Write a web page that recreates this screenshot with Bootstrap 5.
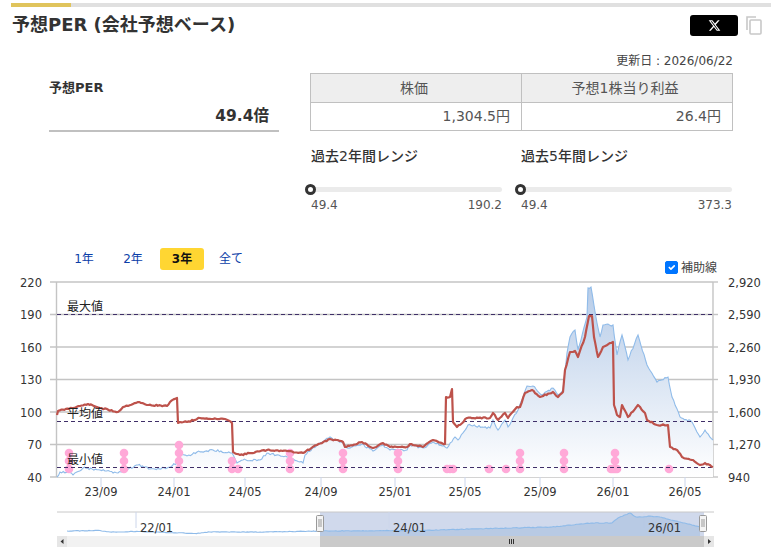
<!DOCTYPE html>
<html lang="ja">
<head>
    <meta charset="UTF-8">
    <title>予想PER</title>
    <link rel="stylesheet" href="https://cdn.jsdelivr.net/npm/bootstrap@5.3.0/dist/css/bootstrap.min.css">
    <style>
        body { font-family: "DejaVu Sans", "Noto Sans CJK JP", sans-serif; color: #333; background: #fff; overflow: hidden; }
        .page { width: 771px; height: 550px; padding-top: 3px; }
        .top-bar { height: 4px; margin-left: 11px; background: #e0e0e0; }
        .top-bar div { width: 60px; height: 4px; background: #e0c45c; }
        .title-row { height: 28px; margin-top: 4px; padding: 0 9px 0 12px; }
        .title-row h1 { font-size: 18px; font-weight: 700; line-height: 28px; margin: 0; }
        .x-btn { width: 48px; height: 21px; background: #000; border-radius: 3px; margin-right: 8px; }
        .update { font-size: 12px; line-height: 16px; color: #444; margin-top: 14px; padding-right: 38px; }
        .summary { margin-top: 4px; padding-left: 49px; padding-right: 38px; }
        .per-box { width: 230px; height: 59px; margin-right: 31px; border-bottom: 2px solid #c0c0c0; }
        .per-label { font-size: 13px; font-weight: 700; line-height: 16px; margin-top: 7px; }
        .per-value { font-size: 15.5px; font-weight: 700; line-height: 24px; margin-top: 8px; padding-right: 10px; }
        .table.price-table { width: 423px; margin: 0; font-size: 14px; table-layout: fixed; border-color: #c0c0c0; }
        .table.price-table > * > * > * { padding: 0 11px 0 7px; height: 28.5px; line-height: 20px; vertical-align: middle; color: #555; }
        .table.price-table th { background: #eee; font-weight: 400; text-align: center; }
        .table.price-table td { text-align: right; }
        .ranges { margin-left: 305px; margin-top: 15px; }
        .range-a { width: 197px; margin-right: 13px; }
        .range-b { width: 217px; }
        .range-title { font-size: 14px; font-weight: 500; line-height: 18px; padding-left: 6px; }
        .track { position: relative; height: 5px; background: #ebebeb; border-radius: 3px; margin-top: 22px; }
        .thumb { position: absolute; left: 0; top: -3px; width: 11px; height: 11px; border: 3px solid #333; border-radius: 50%; background: #fff; }
        .range-values { font-size: 12px; line-height: 16px; color: #555; margin-top: 5px; padding-left: 6px; }
        .chart-head { height: 27px; margin-top: 35px; padding-right: 54px; padding-left: 62px; }
        .periods a { display: block; width: 44px; height: 22px; margin-right: 5px; font-size: 12px; line-height: 22px; text-align: center; color: #0b3ea8; text-decoration: none; border-radius: 3px; }
        .periods a.active { background: #ffd632; color: #111; font-weight: 700; }
        .aux { font-size: 12px; line-height: 14px; color: #444; margin: 13px 0 0; }
        .aux .form-check-input { width: 13px; height: 13px; margin: 0 3px 0 0; float: none; border-radius: 2px; vertical-align: -2px; }
        .aux .form-check-input:checked { background-color: #0075ff; border-color: #0075ff; }
        .chart { display: block; }
        .chart text { font-family: "DejaVu Sans", "Noto Sans CJK JP", sans-serif; font-size: 12px; fill: #222; }
        .chart .axis { font-size: 11.5px; fill: #333; }
        .chart .grid { stroke: #c4c4c4; stroke-width: 1.4; }
        .chart .dash { stroke: #3f2f68; stroke-width: 1; stroke-dasharray: 4 3; }
        .chart .tick { stroke: #ccd6eb; stroke-width: 1; }
    </style>
</head>
<body>
<div class="page">
    <div class="top-bar"><div></div></div>

    <div class="title-row d-flex justify-content-between align-items-center">
        <h1>予想PER (会社予想ベース)</h1>
        <div class="d-flex align-items-center">
            <div class="x-btn d-flex align-items-center justify-content-center">
                <svg width="13" height="13" viewBox="0 0 24 24" fill="#fff"><path d="M18.244 2.25h3.308l-7.227 8.26 8.502 11.24H16.17l-5.214-6.817L4.99 21.75H1.68l7.73-8.835L1.254 2.25H8.08l4.713 6.231zm-1.161 17.52h1.833L7.084 4.126H5.117z"/></svg>
            </div>
            <svg width="16" height="19" viewBox="0 0 16 19" fill="none" stroke="#c8c8c8" stroke-width="1.6"><path d="M1 14V1h9"/><rect x="4" y="4" width="11" height="14" rx="1"/></svg>
        </div>
    </div>

    <div class="update text-end">更新日 : 2026/06/22</div>

    <div class="summary d-flex align-items-start">
        <div class="per-box flex-shrink-0">
            <div class="per-label">予想PER</div>
            <div class="per-value text-end">49.4倍</div>
        </div>
        <table class="table table-bordered price-table">
            <thead><tr><th>株価</th><th>予想1株当り利益</th></tr></thead>
            <tbody><tr><td>1,304.5円</td><td>26.4円</td></tr></tbody>
        </table>
    </div>

    <div class="ranges d-flex">
        <div class="range-a">
            <div class="range-title">過去2年間レンジ</div>
            <div class="track"><div class="thumb"></div></div>
            <div class="range-values d-flex justify-content-between"><span>49.4</span><span>190.2</span></div>
        </div>
        <div class="range-b">
            <div class="range-title">過去5年間レンジ</div>
            <div class="track"><div class="thumb"></div></div>
            <div class="range-values d-flex justify-content-between"><span>49.4</span><span>373.3</span></div>
        </div>
    </div>

    <div class="chart-head d-flex justify-content-between">
        <div class="periods d-flex align-items-start">
            <a href="#">1年</a><a href="#">2年</a><a href="#" class="active">3年</a><a href="#">全て</a>
        </div>
        <label class="aux"><input class="form-check-input" type="checkbox" checked>補助線</label>
    </div>

    <svg class="chart" width="771" height="275" viewBox="0 275 771 275">
        <defs>
            <linearGradient id="areaFill" x1="0" y1="0" x2="0" y2="1">
                <stop offset="0" stop-color="#b7cce8"/>
                <stop offset="1" stop-color="#ffffff"/>
            </linearGradient>
        </defs>
        <g id="grid"></g>
        <path id="area" fill="url(#areaFill)"></path>
        <path id="price" fill="none" stroke="#8fbbe9" stroke-width="1.1"></path>
        <g id="dots" fill="#ffa9d8"></g>
        <line class="dash" x1="57" x2="713" y1="314.5" y2="314.5"/>
        <line class="dash" x1="57" x2="713" y1="421.5" y2="421.5"/>
        <line class="dash" x1="57" x2="713" y1="467.5" y2="467.5"/>
        <path id="per" fill="none" stroke="#bd524b" stroke-width="2.2" stroke-linejoin="round"></path>
        <text x="67" y="311">最大値</text>
        <text x="67" y="418">平均値</text>
        <text x="67" y="464">最小値</text>
        <g id="labels"></g>

        <!-- navigator -->
        <rect x="320" y="512" width="384" height="24" fill="#d0d9ec"/>
        <line x1="57" x2="714" y1="512" y2="512" stroke="#c8c8c8" stroke-width="1"/>
        <line class="tick" x1="136" x2="136" y1="512" y2="528"/>
        <line class="tick" x1="389" x2="389" y1="512" y2="528"/>
        <line class="tick" x1="644" x2="644" y1="512" y2="528"/>
        <path id="miniArea" fill="#a9bfe0" fill-opacity=".6"></path>
        <path id="mini" fill="none" stroke="#8fbbe9" stroke-width="1.1"></path>
        <text class="axis" x="140" y="532">22/01</text>
        <text class="axis" x="393" y="532">24/01</text>
        <text class="axis" x="648" y="532">26/01</text>
        <rect x="316.5" y="515.5" width="7" height="16" rx="1" fill="#f4f4f4" stroke="#999"/>
        <rect x="699.5" y="515.5" width="7" height="16" rx="1" fill="#f4f4f4" stroke="#999"/>
        <path d="M319 519v8M321 519v8M702 519v8M704 519v8" stroke="#999" stroke-width="1"/>

        <!-- scrollbar -->
        <rect x="57" y="536" width="657" height="11" fill="#f2f2f2"/>
        <rect x="57" y="536" width="10" height="11" fill="#e6e6e6"/>
        <rect x="704" y="536" width="10" height="11" fill="#e6e6e6"/>
        <rect x="320" y="536" width="384" height="11" fill="#cacaca"/>
        <path d="M63.5 539l-3 2.5 3 2.5zM708 539l3 2.5-3 2.5z" fill="#333"/>
        <path d="M509.5 539v5M511.5 539v5M513.5 539v5" stroke="#333" stroke-width="1"/>
    </svg>
</div>

<script>
    const NS = "http://www.w3.org/2000/svg";

    const perData = [[57,415],[58,411],[80,406],[88,404],[100,408],[118,412],[123,407],[138,402],[147,405],[167,406],[170,402],[177,398],[178,423],[180,422],[187,422],[200,418],[213,419],[225,419],[232,423],[233,452],[240,455],[267,450],[287,451],[303,453],[317,445],[330,439],[343,442],[345,447],[362,442],[373,448],[383,443],[390,447],[407,447],[410,444],[423,447],[433,440],[445,444],[446,397],[450,397],[452,389],[453,422],[457,427],[467,418],[490,418],[493,413],[498,420],[505,413],[508,418],[517,407],[520,407],[525,393],[532,390],[540,397],[553,392],[558,397],[563,392],[565,370],[570,352],[575,351],[578,357],[585,337],[589,316],[592,316],[594,337],[598,357],[603,347],[613,342],[614,405],[617,415],[620,417],[622,405],[628,417],[638,405],[645,413],[647,420],[657,425],[668,425],[670,447],[677,450],[682,457],[693,460],[700,465],[705,463],[713,467]];

    const priceData = [[57,477],[60,472],[68,472],[73,475],[83,468],[100,470],[118,473],[138,465],[150,469],[167,468],[177,463],[180,453],[187,456],[197,452],[213,450],[232,453],[237,463],[243,460],[260,460],[267,453],[287,457],[303,463],[305,455],[317,445],[330,437],[343,443],[347,448],[362,444],[373,451],[383,445],[390,450],[407,450],[410,445],[423,448],[433,442],[447,448],[455,437],[458,440],[468,425],[490,428],[493,420],[498,430],[505,420],[508,427],[518,410],[527,386],[533,386],[542,395],[553,388],[558,395],[563,390],[567,353],[570,337],[575,330],[578,350],[587,317],[588,288],[591,287],[597,323],[600,337],[603,325],[613,325],[617,355],[622,335],[628,360],[638,335],[647,365],[657,382],[668,377],[672,397],[680,417],[692,422],[700,437],[705,430],[713,440]];

    const miniData = [[67,531],[100,530.5],[110,532],[140,531.5],[195,533.5],[210,532],[265,532],[320,531],[420,530.5],[470,529],[552,527],[591,523],[612,523],[618,518],[630,513],[636,517],[643,517],[650,516],[660,517],[680,522],[700,527]];

    // hand traced points, filled out with a little seeded wobble
    function wobble(points, amount, seed) {
        let out = [];
        let s = seed;
        for (let i = 0; i < points.length - 1; i++) {
            const [x0, y0] = points[i];
            const [x1, y1] = points[i + 1];
            const steps = Math.max(1, Math.round((x1 - x0) / 1.6));
            for (let k = 0; k < steps; k++) {
                s = (s * 9301 + 49297) % 233280;
                const t = k / steps;
                const j = k === 0 ? 0 : (s / 233280 - 0.5) * amount;
                out.push([x0 + (x1 - x0) * t, y0 + (y1 - y0) * t + j]);
            }
        }
        out.push(points[points.length - 1]);
        return out;
    }

    function toPath(points) {
        return "M" + points.map(p => p[0].toFixed(1) + " " + p[1].toFixed(1)).join("L");
    }

    const per = wobble(perData, 1.4, 11);
    const price = wobble(priceData, 2, 29);
    document.getElementById("per").setAttribute("d", toPath(per));
    document.getElementById("price").setAttribute("d", toPath(price));
    document.getElementById("area").setAttribute("d", toPath(price) + "L713 477L57 477Z");
    const mini = wobble(miniData, 0.6, 5);
    document.getElementById("mini").setAttribute("d", toPath(mini));
    // only the selected part of the navigator shows a fill
    const miniSelected = mini.filter(p => p[0] >= 320);
    document.getElementById("miniArea").setAttribute("d", toPath(miniSelected) + "L700 536L320 536Z");

    function add(parent, tag, attrs, text) {
        const el = document.createElementNS(NS, tag);
        for (const k in attrs) el.setAttribute(k, attrs[k]);
        if (text) el.textContent = text;
        parent.appendChild(el);
    }

    const grid = document.getElementById("grid");
    const labels = document.getElementById("labels");
    const left = ["220", "190", "160", "130", "100", "70", "40"];
    const right = ["2,920", "2,590", "2,260", "1,930", "1,600", "1,270", "940"];
    left.forEach((v, i) => {
        const y = 282 + i * 32.5;
        add(grid, "line", { class: "grid", x1: 50, x2: 713, y1: y, y2: y });
        add(grid, "line", { class: "grid", x1: 713, x2: 718, y1: y, y2: y });
        add(labels, "text", { class: "axis", x: 42, y: y + 4.5, "text-anchor": "end" }, v);
        add(labels, "text", { class: "axis", x: 728, y: y + 4.5 }, right[i]);
    });
    add(grid, "line", { class: "grid", x1: 56.5, x2: 56.5, y1: 282, y2: 477 });
    add(grid, "line", { class: "grid", x1: 713, x2: 713, y1: 282, y2: 477 });

    [[101,"23/09"],[174,"24/01"],[245,"24/05"],[321,"24/09"],[395,"25/01"],[465,"25/05"],[540,"25/09"],[613,"26/01"],[685,"26/05"]].forEach(([x, t]) => {
        add(labels, "line", { class: "tick", x1: x, x2: x, y1: 477, y2: 487 });
        add(labels, "text", { class: "axis", x: x, y: 496, "text-anchor": "middle" }, t);
    });

    // dividend dots: [x, how many stacked]
    const dots = document.getElementById("dots");
    [[69,3],[124,3],[179,4],[232,2],[238,1],[290,3],[343,3],[398,3],[447,1],[450,1],[453,1],[489,1],[506,1],[520,3],[564,3],[611,1],[613,1],[615,3],[617,1],[669,1]].forEach(([x, n]) => {
        for (let i = 0; i < n; i++) add(dots, "circle", { cx: x, cy: 469 - i * 8, r: 4.3 });
    });
</script>
<script src="https://cdn.jsdelivr.net/npm/bootstrap@5.3.0/dist/js/bootstrap.bundle.min.js"></script>
</body>
</html>
